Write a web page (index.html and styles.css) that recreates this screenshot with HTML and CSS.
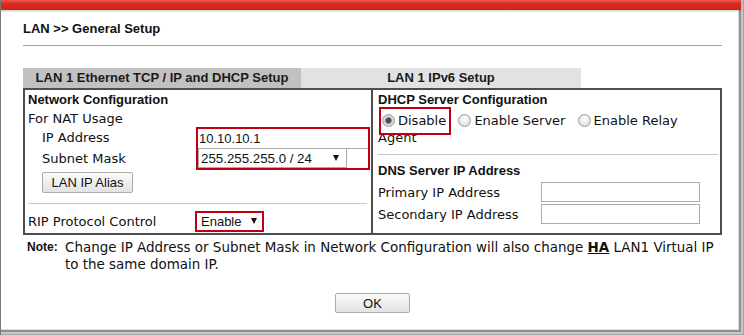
FILE: index.html
```html
<!DOCTYPE html>
<html lang="en">
<head>
    <meta charset="UTF-8">
    <title>LAN General Setup</title>
    <link rel="stylesheet" href="styles.css">
</head>
<body>
    <div class="window">
        <div class="titlebar"></div>
        <div class="page">
            <h1 class="page-title">LAN &gt;&gt; General Setup</h1>

            <div class="tabs">
                <div class="tab tab-active">LAN 1 Ethernet TCP / IP and DHCP Setup</div>
                <div class="tab">LAN 1 IPv6 Setup</div>
            </div>

            <div class="panel">
                <div class="cell cell-left">
                    <div class="sub-title">Network Configuration</div>
                    <div class="line">For NAT Usage</div>
                    <div class="ip-block">
                        <div class="ip-labels">
                            <div class="ip-label">IP Address</div>
                            <div class="ip-label">Subnet Mask</div>
                        </div>
                        <div class="hl-box ip-box">
                            <input class="ip-input" type="text" value="10.10.10.1">
                            <span class="select-wrap mask-select">
                                <select><option>255.255.255.0 / 24</option></select>
                            </span>
                        </div>
                    </div>
                    <button class="btn alias-btn">LAN IP Alias</button>
                    <div class="divider"></div>
                    <div class="rip-row">
                        <span class="rip-label">RIP Protocol Control</span>
                        <span class="hl-box rip-box">
                            <span class="select-wrap plain-select">
                                <select><option>Enable</option></select>
                            </span>
                        </span>
                    </div>
                </div>

                <div class="cell cell-right">
                    <div class="sub-title">DHCP Server Configuration</div>
                    <div class="radios">
                        <label class="opt opt-marked"><input type="radio" name="dhcp" checked>Disable<span class="mark"></span></label>
                        <label class="opt"><input type="radio" name="dhcp">Enable Server</label>
                        <label class="opt"><input type="radio" name="dhcp">Enable Relay Agent</label>
                    </div>
                    <div class="divider divider-right"></div>
                    <div class="sub-title dns-title">DNS Server IP Address</div>
                    <div class="dns-row">
                        <span class="dns-label">Primary IP Address</span>
                        <input class="dns-input" type="text">
                    </div>
                    <div class="dns-row">
                        <span class="dns-label">Secondary IP Address</span>
                        <input class="dns-input" type="text">
                    </div>
                </div>
            </div>

            <div class="note">
                <span class="note-head">Note:</span>
                <p class="note-text">Change IP Address or Subnet Mask in Network Configuration will also change <u class="ha">HA</u> LAN1 Virtual IP to the same domain IP.</p>
            </div>

            <div class="actions">
                <button class="btn ok-btn">OK</button>
            </div>
        </div>
    </div>
</body>
</html>
```

FILE: styles.css
```css
* {
    margin: 0;
    padding: 0;
    box-sizing: border-box;
}

body {
    width: 744px;
    height: 335px;
    overflow: hidden;
    background: #ffffff;
    color: #111111;
    font-family: "DejaVu Sans", Verdana, sans-serif;
    font-size: 13px;
}

.window {
    height: 335px;
    border-left: 1px solid #7c7c7c;
    box-shadow: inset -1px -1px 0 #a4a4a4, inset -3px -3px 0 #c6c6c6, inset -5px -5px 0 #909090, inset -6px -6px 0 #dddddd;
}

.titlebar {
    height: 10px;
    margin-right: 3px;
    background: linear-gradient(to bottom, #ea5a50 0%, #dc2b21 35%, #cf231b 100%);
    box-shadow: 0 1px 2px rgba(0, 0, 0, 0.25);
}

.page {
    padding: 11px 22px 0 22px;
}

.page-title {
    font-family: "Liberation Sans", Arial, sans-serif;
    font-size: 13px;
    font-weight: bold;
    line-height: 15px;
    padding-bottom: 9px;
    border-bottom: 1px solid #a3a3a3;
    color: #111111;
}

.tabs {
    display: flex;
    margin-top: 22px;
    height: 20px;
}

.tab {
    width: 280px;
    background: #e2e2e2;
    font-family: "Liberation Sans", Arial, sans-serif;
    font-size: 13px;
    font-weight: bold;
    line-height: 20px;
    text-align: center;
    color: #1a1a1a;
}

.tab-active {
    width: 278px;
    background: #c1c1c1;
}

.panel {
    display: grid;
    grid-template-columns: 348px 1fr;
    border: 2px solid #4e4e4e;
}

.cell-left {
    border-right: 2px solid #4e4e4e;
    padding: 0 1px 1px 3px;
}

.cell-right {
    padding: 0 2px 8px 5px;
}

.sub-title {
    font-family: "Liberation Sans", Arial, sans-serif;
    font-size: 13px;
    font-weight: bold;
    line-height: 20px;
    height: 20px;
}

.line {
    line-height: 17px;
    height: 17px;
}

.ip-block {
    display: flex;
}

.ip-labels {
    width: 168px;
    padding-left: 14px;
}

.ip-label {
    height: 22px;
    line-height: 22px;
}

.ip-label + .ip-label {
    height: 21px;
    line-height: 20px;
}

.hl-box {
    border: 2px solid #c00010;
}

.ip-box {
    width: 174px;
    height: 43px;
}

.ip-input {
    display: block;
    width: 100%;
    height: 20px;
    border: none;
    border-bottom: 1px solid #ababab;
    padding-left: 1px;
    font-family: "Liberation Sans", Arial, sans-serif;
    font-size: 13px;
    color: #111111;
    outline: none;
}

.select-wrap {
    position: relative;
    display: block;
}

.select-wrap select {
    appearance: none;
    -webkit-appearance: none;
    display: block;
    background: #ffffff;
    font-family: "Liberation Sans", Arial, sans-serif;
    font-size: 13px;
    color: #111111;
    outline: none;
}

.select-wrap::after {
    content: "";
    position: absolute;
    top: 8px;
    border-left: 3.5px solid transparent;
    border-right: 3.5px solid transparent;
    border-top: 6px solid #111111;
}

.mask-select select {
    width: 149px;
    height: 19px;
    border: 1px solid #a9a9a9;
    border-top: none;
    padding-left: 2px;
    font-size: 13.3px;
}

.mask-select::after {
    left: 135px;
    top: 6px;
}

.alias-btn {
    display: block;
    margin: 2px 0 0 14px;
    width: 91px;
    height: 21px;
}

.btn {
    font-family: "Liberation Sans", Arial, sans-serif;
    font-size: 13px;
    color: #111111;
    border: 1px solid #ababab;
    border-radius: 2px;
    background: linear-gradient(to bottom, #fbfbfb, #e3e3e3);
}

.divider {
    margin-top: 10px;
    border-top: 1px solid #c6c6c6;
    margin-right: 3px;
}

.rip-row {
    display: flex;
    margin-top: 7px;
    align-items: center;
}

.rip-label {
    width: 167px;
}

.rip-box {
    width: 69px;
    height: 21px;
}

.plain-select select {
    width: 65px;
    height: 17px;
    border: none;
    padding-left: 4px;
}

.plain-select::after {
    left: 54px;
    top: 5px;
}

.radios {
    margin-top: 2px;
    line-height: 17px;
}

.opt input {
    appearance: none;
    -webkit-appearance: none;
    width: 13px;
    height: 13px;
    margin: 0 3px 0 4px;
    vertical-align: -2px;
    border: 1px solid #9a9a9a;
    border-radius: 50%;
    background: radial-gradient(circle at 50% 40%, #ffffff 0%, #e6e6e6 60%, #d2d2d2 100%);
}

.opt input:checked {
    background: radial-gradient(circle, #4d4d4d 0, #4d4d4d 2.5px, #cfcfcf 3.5px, #ececec 100%);
}

.opt + .opt input {
    margin-left: 8px;
}

.opt-marked {
    position: relative;
    display: inline-block;
}

.mark {
    position: absolute;
    left: 1px;
    top: -5px;
    width: 72px;
    height: 28px;
    border: 2px solid #c00010;
}

.divider-right {
    margin-top: 8px;
    margin-right: 0;
}

.dns-title {
    margin-top: 7px;
    line-height: 18px;
    height: 18px;
}

.dns-row {
    display: flex;
    align-items: center;
    height: 22px;
    margin-top: 1px;
}

.dns-row + .dns-row {
    margin-top: 0;
}

.dns-label {
    width: 163px;
}

.dns-input {
    width: 159px;
    height: 20px;
    border: 1px solid #acacac;
    outline: none;
}

.note {
    display: flex;
    margin-top: 4px;
    padding-left: 4px;
}

.note-head {
    width: 38px;
    font-family: "Liberation Sans", Arial, sans-serif;
    font-size: 12px;
    font-weight: bold;
    line-height: 17px;
}

.note-text {
    width: 655px;
    font-size: 13.45px;
    line-height: 17px;
}

.ha {
    font-weight: bold;
}

.actions {
    display: flex;
    justify-content: center;
    margin-top: 20px;
}

.ok-btn {
    width: 75px;
    height: 20px;
}
```
